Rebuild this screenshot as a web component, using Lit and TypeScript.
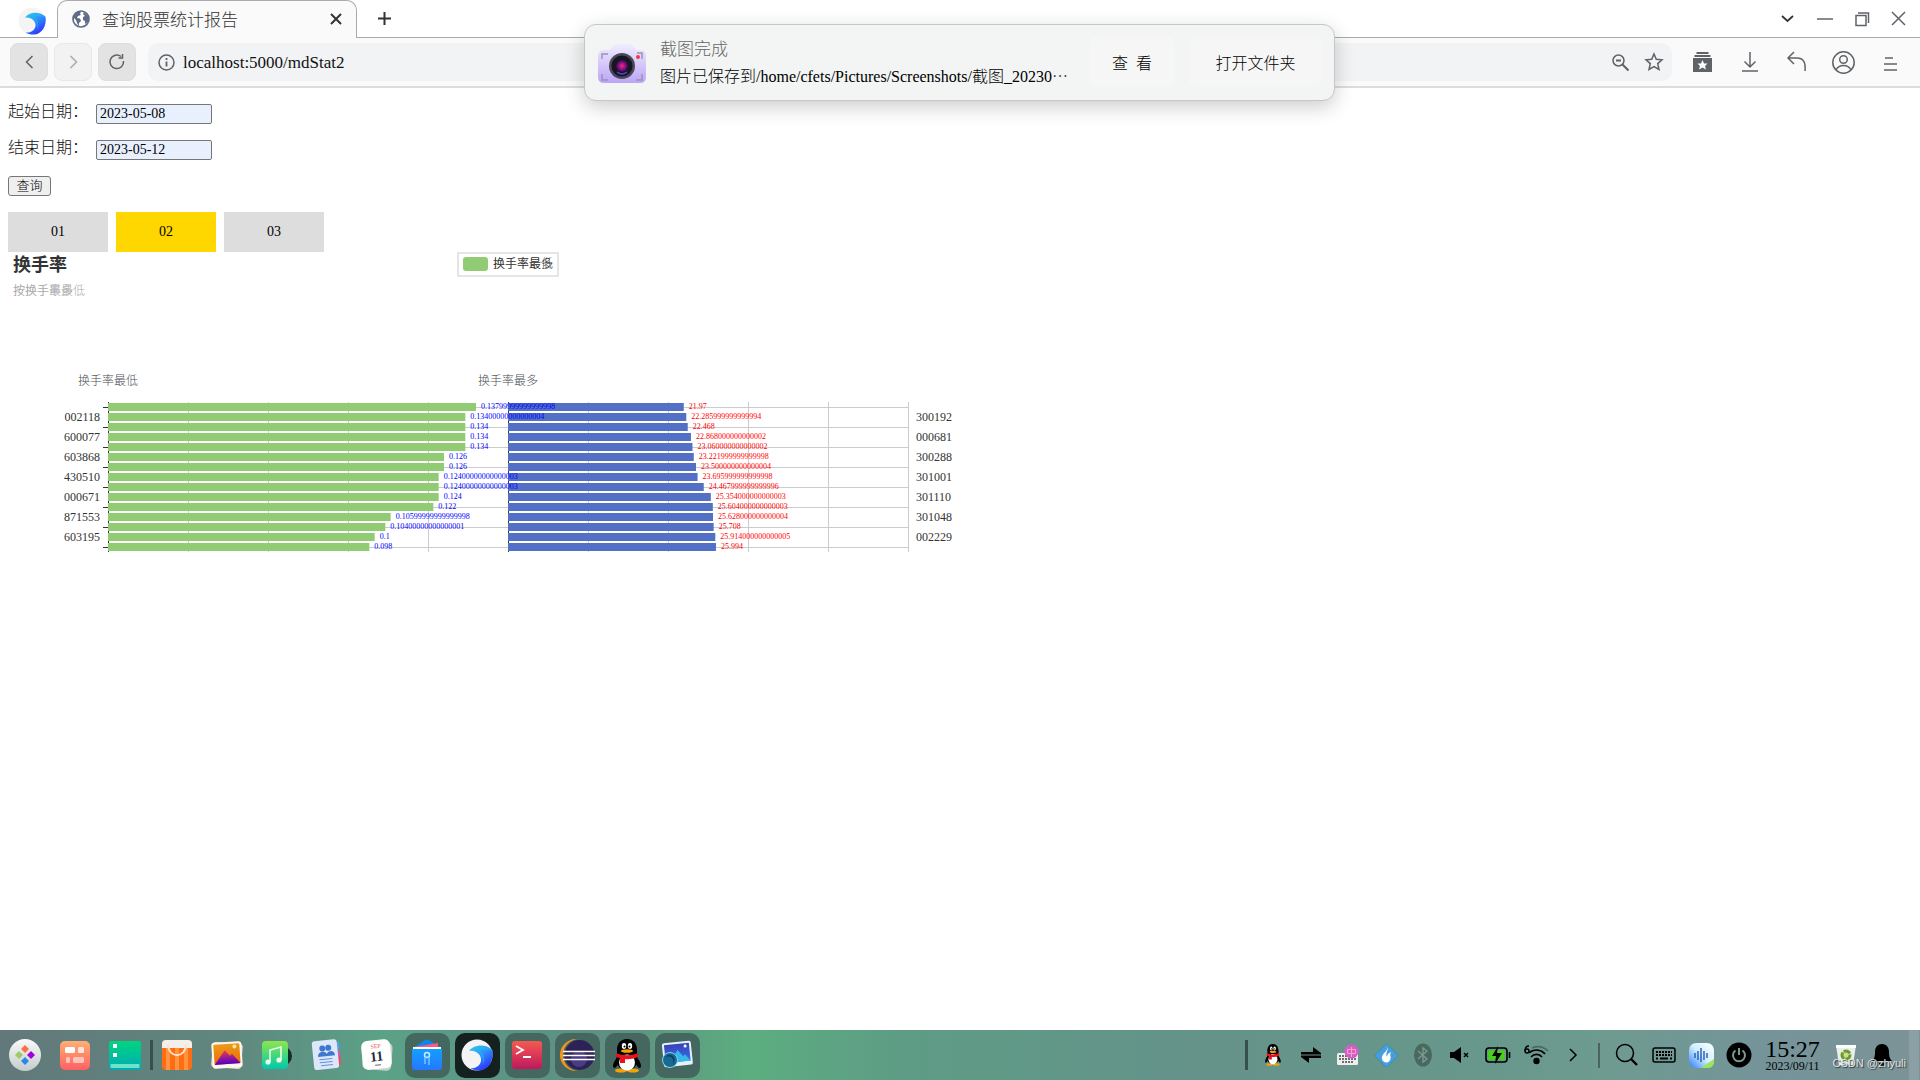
import { LitElement, html, svg, css } from "lit";
import { customElement, state } from "lit/decorators.js";

interface Bar {
  value: number;
  label: string;
}

const bar = (label: string): Bar => ({ value: Number(label), label });

const LOWEST: Bar[] = [
  "0.13799999999999998", "0.13400000000000004", "0.134", "0.134", "0.134",
  "0.126", "0.126", "0.12400000000000003", "0.12400000000000003", "0.124",
  "0.122", "0.10599999999999998", "0.10400000000000001", "0.1", "0.098",
].map(bar);

const HIGHEST: Bar[] = [
  "21.97", "22.285999999999994", "22.468", "22.868000000000002",
  "23.060000000000002", "23.221999999999998", "23.500000000000004",
  "23.695999999999998", "24.467999999999996", "25.354000000000003",
  "25.604000000000003", "25.628000000000004", "25.708",
  "25.914000000000005", "25.994",
].map(bar);

const LOWEST_CODES = ["002118", "600077", "603868", "430510", "000671", "871553", "603195"];
const HIGHEST_CODES = ["300192", "000681", "300288", "301001", "301110", "301048", "002229"];

const PLOT_TOP = 150;
const PLOT_WIDTH = 400;
const ROW = 10;

@customElement("turnover-chart")
export class TurnoverChart extends LitElement {
  static styles = css`
    :host {
      display: block;
    }
    .canvas {
      display: block;
      font-family: "Liberation Serif", "Noto Sans CJK SC", serif;
      font-weight: 300;
      font-size: 12px;
    }
    .title {
      font-size: 18px;
      font-weight: 700;
      fill: #333;
    }
    .subtitle {
      fill: #aaa;
    }
    .text {
      fill: #333;
    }
    .name {
      fill: #4c4e55;
      text-anchor: middle;
    }
    .left {
      text-anchor: end;
    }
    .value {
      font-size: 8px;
    }
    .low {
      fill: #00f;
    }
    .high {
      fill: #f00;
    }
    .grid {
      stroke: #ccc;
      fill: none;
    }
    .axis {
      stroke: #333;
      fill: none;
    }
  `;

  private grid(x: number) {
    const bottom = PLOT_TOP + LOWEST.length * ROW;
    return svg`
      ${[1, 2, 3, 4, 5].map((i) => svg`<path class="grid" shape-rendering="crispEdges" d="M${x + i * 80} ${PLOT_TOP}V${bottom}" />`)}
      ${[0, 1, 2, 3, 4, 5, 6, 7].map((i) => svg`<path class="grid" shape-rendering="crispEdges" d="M${x} ${PLOT_TOP + 5 + i * 20}h${PLOT_WIDTH}" />`)}
      <path class="axis" shape-rendering="crispEdges" d="M${x} ${PLOT_TOP}V${bottom}" />`;
  }

  private bars(x: number, rows: Bar[], max: number, color: string) {
    return rows.map((r, i) => svg`<rect x=${x} y=${PLOT_TOP + 1 + i * ROW} width=${(r.value / max) * PLOT_WIDTH} height="8" fill=${color} />`);
  }

  private values(x: number, rows: Bar[], max: number, cls: string) {
    return rows.map((r, i) => svg`<text class="value ${cls}" x=${x + 5 + (r.value / max) * PLOT_WIDTH} y=${PLOT_TOP + 7 + i * ROW}>${r.label}</text>`);
  }

  render() {
    return html`
      <svg class="canvas" width="960" height="320" viewBox="0 0 960 320" role="img" aria-label="换手率">
        <text class="title" x="5" y="19">换手率</text>
        <text class="subtitle" x="5" y="43">按换手率最低</text>
        <text class="subtitle" x="5" y="43">按换手最多</text>
        <rect x="450" y="1" width="100" height="23" fill="#fff" stroke="#ccc" />
        <rect x="455" y="5" width="25" height="14" rx="3" fill="#91cc75" />
        <text class="text" x="485" y="16">换手率最多</text>
        <text class="text" x="485" y="16">换手率最低</text>
        <text class="name" x="100" y="133">换手率最低</text>
        <text class="name" x="500" y="133">换手率最多</text>
        ${this.grid(100)} ${this.grid(500)}
        ${[0, 1, 2, 3, 4, 5, 6, 7].map((i) => svg`<path class="axis" shape-rendering="crispEdges" d="M95 ${PLOT_TOP + 5 + i * 20}h5" />`)}
        ${this.bars(100, LOWEST, 0.15, "#91cc75")}
        ${this.bars(500, HIGHEST, 50, "#5470c6")}
        ${this.values(100, LOWEST, 0.15, "low")}
        ${this.values(500, HIGHEST, 50, "high")}
        ${LOWEST_CODES.map((c, i) => svg`<text class="text left" x="92" y=${PLOT_TOP + 19 + i * 20}>${c}</text>`)}
        ${HIGHEST_CODES.map((c, i) => svg`<text class="text" x="908" y=${PLOT_TOP + 19 + i * 20}>${c}</text>`)}
      </svg>
    `;
  }
}

const penguin = svg`
  <path d="M6 19C2 23 1 28 3 29c2 0 3-2 4-4zM26 19c4 4 5 9 3 10-2 0-3-2-4-4z" fill="#000"/>
  <ellipse cx="10" cy="31.500" rx="6" ry="2" fill="#f5a300"/><ellipse cx="22" cy="31.500" rx="6" ry="2" fill="#f5a300"/>
  <path d="M16 0C9 0 6 5 6 11v5c-2 6 0 15 10 15s12-9 10-15v-5C26 5 23 0 16 0z" fill="#000"/>
  <ellipse cx="16" cy="23.500" rx="8" ry="8" fill="#fff"/>
  <ellipse cx="13" cy="7" rx="2.200" ry="3" fill="#fff"/><ellipse cx="19" cy="7" rx="2.200" ry="3" fill="#fff"/>
  <circle cx="13.500" cy="7.500" r="1" fill="#000"/><circle cx="18.500" cy="7.500" r="1" fill="#000"/>
  <ellipse cx="16" cy="12" rx="6" ry="1.800" fill="#f5a300"/>
  <path d="M5 14c7 3 15 3 22 0v4c-5 2-10 2.500-13 2v4H9v-5l-4-1z" fill="#e8131c"/>`;

const swirl = (id: string) => svg`
  <defs><linearGradient id=${id} x1="0" y1="0" x2=".6" y2="1"><stop offset="0" stop-color="#35d3e8"/><stop offset=".5" stop-color="#2e8dfb"/><stop offset="1" stop-color="#2c35ff"/></linearGradient></defs>
  <circle cx="16" cy="16" r="15.500" fill="#f4f4f4"/>
  <path d="M8 12C12 6 24 4 31.500 11 33 22 27 31 18 31.500c-4 0-7-1-9-2.500 5 1 10-2 11-7 1-6-5-11-12-10z" fill="url(#${id})"/>
  <path d="M12 10c8-4 16-2 19.500 2-5-2-10-2-13 0 5 3 6 9 3 14 2-7-3-14-9.500-16z" fill="#22b7f0" opacity=".6"/>`;

interface App {
  name: string;
  open?: boolean;
  active?: boolean;
  art: unknown;
}

const APPS: App[] = [
  { name: "启动器", art: svg`
    <defs><linearGradient id="la" x1="0" y1="0" x2="0" y2="1"><stop stop-color="#fafafa"/><stop offset="1" stop-color="#c3cccc"/></linearGradient></defs>
    <circle cx="16" cy="16" r="16" fill="url(#la)"/>
    <path d="M16 6l4 4-4 4-4-4z" fill="#ff7043"/><path d="M10 12l4 4-4 4-4-4z" fill="#9ccc65"/><path d="M22 12l4 4-4 4-4-4z" fill="#a500d5"/><path d="M16 18l4 4-4 4-4-4z" fill="#2a87e8"/>` },
  { name: "多任务视图", art: svg`
    <defs><linearGradient id="mt" x1="0" y1="0" x2="0" y2="1"><stop stop-color="#ffb074"/><stop offset="1" stop-color="#ff5f62"/></linearGradient></defs>
    <rect x="1" y="2" width="30" height="29" rx="5" fill="url(#mt)"/>
    <rect x="6" y="8" width="10" height="6" rx="1.500" fill="#fff"/><rect x="19" y="8" width="6" height="6" rx="1.500" fill="#ffe6df"/><rect x="7" y="18" width="4" height="6" rx="1.500" fill="#ffc2b8"/><rect x="14" y="18" width="11" height="6" rx="1.500" fill="#ffc2b8"/>` },
  { name: "桌面", art: svg`
    <defs><linearGradient id="dk" x1="0" y1="0" x2="0" y2="1"><stop stop-color="#00d57e"/><stop offset="1" stop-color="#00abb5"/></linearGradient></defs>
    <rect y="2" width="32" height="29" rx="2" fill="url(#dk)"/><path d="M4 5h4v4H4zM4 14h4v4H4z" fill="#fff"/><rect x="1.500" y="25" width="29" height="4" rx="1" fill="#6de3c9"/>` },
  { name: "应用商店", art: svg`
    <rect x="1" y="1" width="30" height="30" rx="4" fill="#ff6d13"/><path d="M1 9V5a4 4 0 014-4h22a4 4 0 014 4v4z" fill="#f4efeb"/>
    <path d="M5 9h4v22H5zM14 9h4v22h-4zM23 9h4v22h-4z" fill="#ff9440"/><path d="M7 5c0 15 18 15 18 0" fill="none" stroke="#ffe2cd" stroke-width="1.800"/>` },
  { name: "相册", art: svg`
    <defs><linearGradient id="al" x1="0" y1="0" x2="0" y2="1"><stop stop-color="#e99b1c"/><stop offset="1" stop-color="#f06a00"/></linearGradient><linearGradient id="am" x1="0" y1="0" x2="0" y2="1"><stop stop-color="#f23a54"/><stop offset="1" stop-color="#5200c8"/></linearGradient></defs>
    <rect x="1" y="4" width="30" height="25" rx="3" fill="#e4ddd4" transform="rotate(5 16 16)"/>
    <g transform="rotate(-4 16 16)"><rect x="1" y="3" width="30" height="26" rx="3" fill="#fff6ec"/><rect x="3" y="5" width="26" height="20" rx="1" fill="url(#al)"/><path d="M3 25L14 11l5 6 2-2 8 10z" fill="url(#am)"/><circle cx="24" cy="8" r="2" fill="#ffeaa2"/></g>` },
  { name: "音乐", art: svg`
    <defs><linearGradient id="mu" x1="0" y1="0" x2="0" y2="1"><stop stop-color="#8de64a"/><stop offset="1" stop-color="#00c8ae"/></linearGradient></defs>
    <circle cx="21" cy="17" r="10" fill="#103024"/><rect x="1" y="2" width="26" height="28" rx="4" fill="url(#mu)"/>
    <path d="M9 23V11l11-3v13" fill="none" stroke="#e7ffed" stroke-width="1.600"/><circle cx="7" cy="23" r="2.600" fill="#e7ffed"/><circle cx="18" cy="21" r="2.600" fill="#e7ffed"/>` },
  { name: "联系人", art: svg`
    <g transform="rotate(-6 16 16)"><path d="M25 4h4v7h-4z" fill="#4ba6ef"/><path d="M25 12h4v7h-4z" fill="#d05bc0"/><path d="M25 19h4v8h-4z" fill="#ef4b55"/><rect x="2" y="1" width="25" height="29" rx="3" fill="#dde7fa"/>
    <g fill="#3d78ce"><circle cx="12" cy="9" r="3"/><circle cx="18" cy="9" r="3"/><path d="M7 17c0-6 8-6 9-2 2-4 8-3 8 2z"/></g><path d="M8 20h13M8 23h13M9 26h12" stroke="#5e92df"/></g>` },
  { name: "日历", art: svg`
    <rect x="2" y="3" width="29" height="28" rx="5" fill="#c8d3cf" transform="rotate(4 16 16)"/><g transform="rotate(-6 16 16)"><rect x="1" y="1" width="29" height="29" rx="6" fill="#fff"/>
    <text x="15.500" y="9" font-size="6" text-anchor="middle" fill="#ef5350">SEP</text><text x="15.500" y="22" font-size="14" font-weight="700" text-anchor="middle" fill="#222b3c">11</text><path d="M13 26h6" stroke="#666"/></g>` },
  { name: "文件管理器", open: true, art: svg`
    <defs><linearGradient id="fm" x1="0" y1="0" x2="0" y2="1"><stop stop-color="#12a0ff"/><stop offset="1" stop-color="#2677ff"/></linearGradient></defs>
    <path d="M2 9L14 1q2-1 4 0l12 8z" fill="#0b87ec"/><path d="M3 8l24-4v5H3z" fill="#ff5687"/><path d="M2 8h28v5H2z" fill="#fff"/><path d="M1 10h30v18a3 3 0 01-3 3H4a3 3 0 01-3-3z" fill="url(#fm)"/><circle cx="16" cy="16" r="2.500" fill="none" stroke="#c6ecff" stroke-width="1.500"/><path d="M14 18v7M18 18v8" stroke="#74c4ff" stroke-width="1.500"/>` },
  { name: "浏览器", open: true, active: true, art: swirl("br") },
  { name: "终端", open: true, art: svg`
    <defs><linearGradient id="tm" x1="0" y1="0" x2="0" y2="1"><stop stop-color="#f55a4f"/><stop offset="1" stop-color="#bd185e"/></linearGradient></defs>
    <rect x="1" y="2" width="30" height="28" rx="3" fill="url(#tm)"/><path d="M5 7l7 4-7 4M12 18h8" fill="none" stroke="#fff" stroke-width="1.800"/>` },
  { name: "Eclipse", open: true, art: svg`
    <circle cx="15" cy="16" r="16" fill="#f7941e"/><circle cx="18" cy="16" r="16" fill="#46665e"/><circle cx="18.500" cy="16" r="15" fill="#2c2255"/><circle cx="18" cy="20" r="8" fill="#4a3d86"/><path d="M2 12.500h32M2 16.500h32M2 20.500h32" stroke="#fff" stroke-width="1.700"/>` },
  { name: "QQ", open: true, art: penguin },
  { name: "看图", open: true, art: svg`
    <defs><linearGradient id="vi" x1="0" y1="0" x2="0" y2="1"><stop stop-color="#3a43b9"/><stop offset="1" stop-color="#356dec"/></linearGradient></defs>
    <g transform="rotate(-6 16 16)"><rect x="2" y="3" width="29" height="24" rx="2" fill="#e8efff"/><rect x="4" y="5" width="25" height="18" fill="url(#vi)"/><path d="M8 23l9-12 5 7 2-2 5 7z" fill="#35b9e7"/><circle cx="25" cy="8" r="1.500" fill="#fff"/></g>
    <circle cx="9" cy="21" r="7.500" fill="#196a93" stroke="#86d0ee"/><path d="M3 20c5-5 11-2 9 6 4-6 0-11-5-10z" fill="#0d3f6b"/>` },
];

const TRAY: { name: string; art: unknown }[] = [
  { name: "QQ", art: svg`<g transform="translate(3 1) scale(.56 .65)">${penguin}</g>` },
  { name: "网络传输", art: svg`<path d="M2 8h12V3l8 6v1.500H2zM22 14H10v5l-8-6v-1.500h20z" transform="translate(0 1)" fill="#000"/>` },
  { name: "输入法", art: svg`<rect x="1" y="10" width="21" height="12" rx="1.500" fill="#eee"/><path d="M3 13h17M3 16h17M6 19h11" stroke="#444" stroke-width="1.600" stroke-dasharray="2 1"/><circle cx="15.500" cy="8.500" r="7" fill="#d05fcb"/><path d="M15.500 4v10M11.500 6.500h8v4h-8z" fill="none" stroke="#ff9fc0"/>` },
  { name: "安全", art: svg`<rect x="4" y="4" width="17" height="17" rx="1.500" transform="rotate(45 12.500 12.500)" fill="#459fdc" stroke="#357fb0" stroke-width=".6"/><path d="M14 4c-1 5-7 7-6 12 1 4 6 5 8 1 2-3-1-4 1-8-3 1-4 3-4 5-2-3 1-6 1-10z" fill="#fff"/>` },
  { name: "蓝牙", art: svg`<ellipse cx="12" cy="12" rx="9" ry="11.500" fill="#49695f"/><path d="M7 8l9 8-4 3V5l4 3-9 8" fill="none" stroke="#7a9a90" stroke-width="1.400"/>` },
  { name: "音量", art: svg`<path d="M1 9h4l7-5v16l-7-5H1z" fill="#000"/><path d="M15 10l4 4M19 10l-4 4" stroke="#000" stroke-width="1.400"/>` },
  { name: "电池", art: svg`<rect x="0" y="5" width="21" height="14" rx="3" fill="none" stroke="#000" stroke-width="1.600"/><rect x="2.500" y="7.500" width="16" height="9" fill="#43d512"/><path d="M23.500 9v6" stroke="#000" stroke-width="1.600"/><path d="M12 3L6 13h4l-1 8 7-11h-5z" fill="#000"/>` },
  { name: "无线网络", art: svg`<g fill="none" stroke="#000" stroke-width="1.700"><path d="M7 14a7 7 0 0111 0"/><path d="M5 10a11 11 0 0116 1"/><path d="M8 5a15 15 0 0116 3" opacity=".3"/></g><circle cx="12.500" cy="18" r="3.200" fill="#000"/><path d="M5 3C2 3 1 5 1 8" fill="none" stroke="#000" stroke-width="1.500"/><circle cx="3" cy="8" r="2" fill="none" stroke="#000" stroke-width="1.500"/>` },
  { name: "展开", art: svg`<path d="M9 6l6 6-6 6" fill="none" stroke="#000" stroke-width="1.500"/>` },
];

const TOOLS: { name: string; art: unknown }[] = [
  { name: "搜索", art: svg`<circle cx="11" cy="10" r="8.500" fill="none" stroke="#000" stroke-width="1.500"/><path d="M17 16l6 6" stroke="#000" stroke-width="2.400"/>` },
  { name: "屏幕键盘", art: svg`<rect x="1" y="5" width="22" height="14" rx="2" fill="none" stroke="#000" stroke-width="1.500"/><path d="M4 9h16M4 12h16" stroke="#000" stroke-width="2" stroke-dasharray="2 1"/><path d="M4 15.500h2M8 15.500h8M18 15.500h2" stroke="#000" stroke-width="2"/>` },
  { name: "语音助手", art: svg`<defs><linearGradient id="vo" x1="1" y1="0" x2="0" y2="1"><stop stop-color="#fff"/><stop offset=".5" stop-color="#cfefff"/><stop offset="1" stop-color="#2b7bff"/></linearGradient></defs><rect x="0" y="0" width="25" height="25" rx="7" fill="url(#vo)"/><path d="M12 25l13-9v3a6 6 0 01-6 6z" fill="#9be45c"/><path d="M6 10v5M9 8v9M12 5v14M15 8v9M18 10v5" stroke="#2455b8" stroke-width="1.400"/>` },
  { name: "电源", art: svg`<circle cx="12" cy="12" r="12.500" fill="#000"/><path d="M8.500 7.500a6 6 0 107 0M12 5v7" fill="none" stroke="#7a9a94" stroke-width="2"/>` },
];

@customElement("app-root")
export class AppRoot extends LitElement {
  @state() private tab = "02";

  static styles = css`
    :host {
      display: flex;
      flex-direction: column;
      min-height: 100vh;
      position: relative;
      overflow: hidden;
      background: #fff;
      color: #111;
      font-family: "Liberation Serif", "Noto Sans CJK SC", serif;
      font-weight: 300;
      font-size: 16px;
    }
    * {
      box-sizing: border-box;
    }
    button,
    input {
      font: inherit;
      color: inherit;
      margin: 0;
    }
    button {
      border: 0;
      padding: 0;
      background: none;
      display: flex;
      align-items: center;
      justify-content: center;
      flex: none;
    }
    svg {
      display: block;
      overflow: visible;
      flex: none;
    }
    .line {
      fill: none;
      stroke: #5f6368;
      stroke-width: 1.5;
    }

    .strip {
      display: flex;
      height: 38px;
      border-bottom: 1px solid #aaa;
      padding-right: 3px;
    }
    .logo {
      display: flex;
      width: 57px;
      padding: 7px 0 0 18px;
    }
    .tab {
      display: flex;
      align-items: center;
      gap: 12px;
      width: 300px;
      height: 38px;
      padding: 0 8px 2px 14px;
      background: #fafafa;
      border: 1px solid #aaa;
      border-bottom: 0;
      border-radius: 10px 10px 0 0;
      font-size: 17px;
    }
    .tab-title {
      flex: 1;
      color: #333;
    }
    .small {
      width: 24px;
      height: 24px;
    }
    .new {
      width: 54px;
    }
    .window {
      display: flex;
      margin-left: auto;
    }
    .window button {
      width: 37px;
    }
    .bar {
      display: flex;
      align-items: center;
      height: 50px;
      padding: 0 8px 0 10px;
      background: #fafafa;
      border-bottom: 2px solid #dcdce0;
    }
    .nav {
      display: flex;
      gap: 6px;
      margin-right: 12px;
    }
    .nav button {
      width: 38px;
      height: 38px;
      border-radius: 8px;
      border: 1px solid #dedede;
      background: #e3e3e3;
    }
    .nav .off {
      background: #f2f2f2;
      border-color: #e8e8e8;
    }
    .address {
      display: flex;
      align-items: center;
      flex: 1;
      height: 38px;
      padding: 0 1px 0 8px;
      border-radius: 10px;
      background: #f1f3f4;
    }
    .url {
      flex: 1;
      min-width: 0;
      height: 24px;
      border: 0;
      padding: 2px 4px 0;
      background: none;
      font-size: 17px;
      outline: 0;
    }
    .address button {
      width: 34px;
    }
    .address .info {
      width: 20px;
      margin-right: 3px;
    }
    .actions {
      display: flex;
      padding-left: 7px;
      margin-right: -2px;
    }
    .actions button {
      width: 47px;
    }

    .page {
      flex: 1;
      padding: 16px 8px;
    }
    .form {
      display: flex;
      flex-direction: column;
      align-items: flex-start;
      gap: 16px;
    }
    .row {
      display: flex;
      height: 20px;
    }
    .row label {
      width: 88px;
      line-height: 16px;
    }
    .date {
      width: 116px;
      height: 20px;
      padding: 0 3px;
      border: 1px solid #767676;
      border-radius: 2px;
      background: #e8f0fe;
      font-size: 14px;
      color: #000;
    }
    .query {
      width: 43px;
      height: 20px;
      border: 1px solid #767676;
      border-radius: 3px;
      background: #efefef;
      font-size: 13px;
      line-height: 18px;
      color: #000;
    }
    .tabs {
      display: flex;
      gap: 8px;
    }
    .choice {
      width: 100px;
      height: 40px;
      background: #ddd;
      font-size: 14px;
      color: #000;
    }
    .choice.on {
      background: gold;
    }

    .toast {
      position: absolute;
      top: 24px;
      left: 50%;
      width: 751px;
      height: 77px;
      margin-left: -376px;
      display: flex;
      align-items: center;
      padding: 0 12px;
      border: 1px solid #c6c8c8;
      border-radius: 12px;
      background: #f3f4f4;
      box-shadow: 0 6px 20px rgba(0, 0, 0, 0.2);
    }
    .message {
      flex: 1;
      min-width: 0;
      margin-left: 13px;
      white-space: nowrap;
    }
    .heading {
      font-size: 17px;
      line-height: 27px;
      color: #666;
    }
    .detail {
      line-height: 27px;
      color: #000;
    }
    .toast button {
      height: 50px;
      margin-bottom: 2px;
      border-radius: 8px;
      background: #f6f6f6;
      color: #000;
    }
    .toast .view {
      width: 86px;
      margin-right: 14px;
    }
    .toast .folder {
      width: 133px;
    }

    .dock {
      display: flex;
      align-items: center;
      height: 50px;
      padding-right: 1px;
      background: linear-gradient(90deg, #62787a 0, #60877f 12%, #5ba287 20%, #5c9686 25%, #5f8f80 32%, #5cae80 39%, #5e9c85 47%, #65938a 62%, #68978b 78%, #6e9b8f 83%, #75949a 92%, #7c9397 100%);
      color: #000;
    }
    .app {
      width: 50px;
      height: 45px;
    }
    .app span {
      display: flex;
      align-items: center;
      justify-content: center;
      width: 45px;
      height: 45px;
      border-radius: 10px;
    }
    .open span {
      background: #44685f;
    }
    .active span {
      background: #14211f;
    }
    .split {
      width: 3px;
      height: 30px;
      margin-right: -1px;
      background: #38504b;
    }
    .tray {
      display: flex;
      justify-content: space-between;
      width: 336px;
      margin-left: 7px;
    }
    .cell {
      width: 36px;
      height: 36px;
    }
    .mark {
      width: 3px;
      height: 30px;
      margin-left: auto;
      background: #38504b;
    }
    .thin {
      width: 2px;
      height: 25px;
      margin: 0 8px 0 7px;
      background: #4b625f;
    }
    .tools {
      display: flex;
      justify-content: space-between;
      width: 149px;
    }
    .clock {
      display: flex;
      flex-direction: column;
      align-items: center;
      width: 71px;
    }
    .time {
      font-size: 24px;
      line-height: 22px;
    }
    .day {
      font-size: 12px;
      line-height: 12px;
    }
    .edge {
      width: 10px;
      height: 50px;
      margin-left: 9px;
      background: #8aa0a4;
    }
    .credit {
      position: absolute;
      right: 14px;
      bottom: 9px;
      font: 11px/16px "Liberation Sans", sans-serif;
      color: #dfe5e5;
      text-shadow: 1px 1px 1px #333;
    }
  `;

  render() {
    return html`
      <header>
        <div class="strip">
          <div class="logo">
            <svg width="28" height="28" viewBox="0 0 32 32">${swirl("lg")}</svg>
          </div>
          <div class="tab">
            <svg width="18" height="18" viewBox="0 0 18 18"><circle cx="9" cy="9" r="8" fill="#fff" stroke="#5f6b84" stroke-width="1.700"/><path d="M2 6l3-4 4-.5L8 4l1 1-3 1-1 2 3 .5L9 11l-2 2v3l-2-3-1-3-2-2zM12 2l4 4v6l-3 2v-3l-2-1v-3l2-1-2-2z" fill="#5f6b84"/></svg>
            <span class="tab-title">查询股票统计报告</span>
            <button class="small" aria-label="关闭标签页"><svg width="10" height="10" viewBox="0 0 10 10"><path d="M0 0l10 10M10 0L0 10" stroke="#333" stroke-width="2"/></svg></button>
          </div>
          <button class="new" aria-label="新标签页"><svg width="13" height="13" viewBox="0 0 13 13"><path d="M6.500 0v13M0 6.500h13" stroke="#333" stroke-width="2"/></svg></button>
          <div class="window">
            <button aria-label="标签列表"><svg width="11" height="7" viewBox="0 0 11 7"><path d="M0 1l5.500 5L11 1" fill="none" stroke="#333" stroke-width="1.800"/></svg></button>
            <button aria-label="最小化"><svg width="16" height="2" viewBox="0 0 16 2"><path d="M0 1h16" class="line"/></svg></button>
            <button aria-label="还原"><svg width="14" height="14" viewBox="0 0 14 14"><path d="M1 3.500h10v10H1zM3 1h10.500v10" class="line"/></svg></button>
            <button aria-label="关闭"><svg width="13" height="13" viewBox="0 0 13 13"><path d="M0 0l13 13M13 0L0 13" class="line"/></svg></button>
          </div>
        </div>
        <div class="bar">
          <nav class="nav">
            <button aria-label="后退"><svg width="7" height="12" viewBox="0 0 7 12"><path d="M6.500 0L.5 6l6 6" class="line"/></svg></button>
            <button class="off" aria-label="前进"><svg width="7" height="12" viewBox="0 0 7 12"><path d="M.5 0l6 6-6 6" class="line" opacity=".5"/></svg></button>
            <button aria-label="刷新"><svg width="16" height="16" viewBox="0 0 16 16"><path d="M14.500 7A6.800 6.800 0 1 1 12 2.500M9.500 4h4V0" class="line"/></svg></button>
          </nav>
          <div class="address">
            <button class="info" aria-label="网站信息"><svg width="17" height="17" viewBox="0 0 17 17"><circle cx="8.500" cy="8.500" r="7.500" class="line"/><path d="M8.500 7.500v5M8.500 4v2" stroke="#5f6368" stroke-width="1.800"/></svg></button>
            <input class="url" aria-label="地址" .value=${"localhost:5000/mdStat2"} />
            <button aria-label="缩放"><svg width="17" height="17" viewBox="0 0 17 17"><circle cx="6.500" cy="6.500" r="5.500" class="line"/><path d="M4 6.500h5M10.500 10.500l6 6" stroke="#5f6368" stroke-width="2"/></svg></button>
            <button aria-label="收藏"><svg width="18" height="18" viewBox="0 0 18 18"><path d="M9 1l2.300 5.300 5.700.5-4.300 3.800 1.300 5.900-5-3-5 3 1.300-5.900L1 6.800l5.700-.5z" class="line"/></svg></button>
          </div>
          <div class="actions">
            <button aria-label="收藏夹"><svg width="19" height="20" viewBox="0 0 19 20"><path d="M0 6h19v14H0zM1.500 3h16v2h-16zM3.500 0h12v2h-12z" fill="#5f6368"/><path d="M9.500 8l1.500 3.500h3.500L12 14l1 3.500-3.500-2-3.500 2L7 14l-2.500-2.500H8z" fill="#fff"/></svg></button>
            <button aria-label="下载"><svg width="16" height="20" viewBox="0 0 16 20"><path d="M8 0v15M2.500 9.500L8 15l5.500-5.500M0 19h16" class="line"/></svg></button>
            <button aria-label="撤销"><svg width="20" height="20" viewBox="0 0 20 20"><path d="M7 0L1 6l6 6M1 6h9c6 0 9 4 8 13" class="line"/></svg></button>
            <button aria-label="账户"><svg width="23" height="23" viewBox="0 0 23 23"><circle cx="11.500" cy="11.500" r="10.700" class="line"/><circle cx="11.500" cy="8.500" r="3.800" class="line"/><path d="M4 19c3-6 12-6 15 0" class="line"/></svg></button>
            <button aria-label="菜单"><svg width="13" height="14" viewBox="0 0 13 14"><path d="M1 3h8M0 9h13M0 15h13" class="line"/></svg></button>
          </div>
        </div>
      </header>

      <main class="page">
        <form class="form" @submit=${(e: Event) => e.preventDefault()}>
          <div class="row"><label for="from">起始日期：</label><input id="from" class="date" .value=${"2023-05-08"} /></div>
          <div class="row"><label for="to">结束日期：</label><input id="to" class="date" .value=${"2023-05-12"} /></div>
          <button class="query">查询</button>
          <div class="tabs">
            ${["01", "02", "03"].map((t) => html`<button type="button" class="choice ${t === this.tab ? "on" : ""}" @click=${() => (this.tab = t)}>${t}</button>`)}
          </div>
        </form>
        <turnover-chart></turnover-chart>
      </main>

      <footer class="dock">
        ${APPS.map((a, i) => html`
          ${i === 3 ? html`<i class="split"></i>` : ""}
          <button class="app ${a.open ? "open" : ""} ${a.active ? "active" : ""}" aria-label=${a.name}>
            <span><svg width="32" height="32" viewBox="0 0 32 32">${a.art}</svg></span>
          </button>`)}
        <i class="mark"></i>
        <div class="tray">
          ${TRAY.map((t) => html`<button class="cell" aria-label=${t.name}><svg width="24" height="24" viewBox="0 0 24 24">${t.art}</svg></button>`)}
        </div>
        <i class="thin"></i>
        <div class="tools">
          ${TOOLS.map((t) => html`<button class="cell" aria-label=${t.name}><svg width="24" height="24" viewBox="0 0 24 24">${t.art}</svg></button>`)}
        </div>
        <div class="clock"><span class="time">15:27</span><span class="day">2023/09/11</span></div>
        <button class="cell" aria-label="回收站"><svg width="22" height="24" viewBox="0 0 22 24"><path d="M1 2h20l-3 20H4z" fill="#e9efeb"/><path d="M1 2h20v3H1z" fill="#fff"/><circle cx="11" cy="12" r="4" fill="#c9dc9a" stroke="#6f9c29" stroke-width="3" stroke-dasharray="7 1"/></svg></button>
        <button class="cell" aria-label="通知"><svg width="20" height="24" viewBox="0 0 20 24"><path d="M10 1c-5 0-7 4-7 8 0 5-1 7-3 9h20c-2-2-3-4-3-9 0-4-2-8-7-8zM7 20h6c0 4-6 4-6 0z" fill="#000"/></svg></button>
        <i class="edge"></i>
      </footer>
      <div class="credit">CSDN @zhyuli</div>

      <aside class="toast">
        <svg width="50" height="42" viewBox="0 0 50 42">
          <defs>
            <linearGradient id="cm" x1="0" y1="0" x2="0" y2="1"><stop stop-color="#f0edff"/><stop offset="1" stop-color="#bca5f5"/></linearGradient>
            <radialGradient id="ln"><stop stop-color="#f2306c"/><stop offset=".5" stop-color="#9c0f8c"/><stop offset="1" stop-color="#2b1050"/></radialGradient>
          </defs>
          <path d="M7 8h5c3 0 3-6 7-6h14c4 0 4 6 7 6h3q6 0 6 6v21q0 6-6 6H7q-6 0-6-6V14q0-6 6-6z" fill="url(#cm)"/>
          <path d="M5 17v-5h6M40 11h5v6M5 32v6h6M45 32v6h-6" fill="none" stroke="#9d90bd" stroke-width="1.500"/>
          <circle cx="25" cy="24" r="13" fill="#4a4858"/><circle cx="25" cy="24" r="10.500" fill="#17151f"/><circle cx="25" cy="24" r="6" fill="url(#ln)"/><path d="M20 30q5 4 10 0" fill="none" stroke="#4b44df" stroke-width="1.500"/>
          <circle cx="41" cy="15" r="2" fill="#fb3640"/>
        </svg>
        <div class="message">
          <div class="heading">截图完成</div>
          <div class="detail">图片已保存到/home/cfets/Pictures/Screenshots/截图_20230⋯</div>
        </div>
        <button class="view">查&nbsp;&nbsp;看</button>
        <button class="folder">打开文件夹</button>
      </aside>
    `;
  }
}
